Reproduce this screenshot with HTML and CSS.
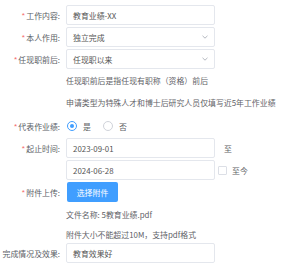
FILE: index.html
```html
<!DOCTYPE html>
<html lang="zh-CN">
<head>
  <meta charset="UTF-8">
  <title>业绩填写</title>
  <link rel="stylesheet" href="styles.css">
</head>
<body>
  <!-- Form: 工作业绩 -->
  <form class="form">
    <div class="row row-first">
      <label class="label"><span class="req">*</span>工作内容:</label>
      <div class="input">教育业绩-XX</div>
    </div>
    <div class="row">
      <label class="label"><span class="req">*</span>本人作用:</label>
      <div class="input select">独立完成
        <svg class="arrow" width="6" height="4" viewBox="0 0 6 4"><path d="M0.5 0.8 L3 3.2 L5.5 0.8" fill="none" stroke="#b4b8bf" stroke-width="1"/></svg>
      </div>
    </div>
    <div class="row">
      <label class="label"><span class="req">*</span>任现职前后:</label>
      <div class="input select">任现职以来
        <svg class="arrow" width="6" height="4" viewBox="0 0 6 4"><path d="M0.5 0.8 L3 3.2 L5.5 0.8" fill="none" stroke="#b4b8bf" stroke-width="1"/></svg>
      </div>
    </div>
    <div class="row hint">
      <span class="label"></span>
      <span class="note">任现职前后是指任现有职称（资格）前后</span>
    </div>
    <div class="row hint">
      <span class="label"></span>
      <span class="note">申请类型为特殊人才和博士后研究人员仅填写近5年工作业绩</span>
    </div>
    <div class="row row-radio">
      <label class="label"><span class="req">*</span>代表作业绩:</label>
      <span class="radio checked"></span><span class="radio-text">是</span>
      <span class="radio"></span><span class="radio-text">否</span>
    </div>
    <div class="row row-date">
      <label class="label"><span class="req">*</span>起止时间:</label>
      <div class="input">2023-09-01</div>
      <span class="to">至</span>
    </div>
    <div class="row">
      <span class="label"></span>
      <div class="input">2024-06-28</div>
      <span class="checkbox"></span><span class="now">至今</span>
    </div>
    <div class="row">
      <label class="label"><span class="req">*</span>附件上传:</label>
      <button type="button" class="upload-button">选择附件</button>
    </div>
    <div class="row row-file">
      <span class="label"></span>
      <span class="note">文件名称: 5教育业绩.pdf</span>
    </div>
    <div class="row row-size">
      <span class="label"></span>
      <span class="note">附件大小不能超过10M，支持pdf格式</span>
    </div>
    <div class="row row-last">
      <label class="label">完成情况及效果:</label>
      <div class="input">教育效果好</div>
    </div>
  </form>
</body>
</html>
```
FILE: styles.css
```css
/* Reset */
* {
  margin: 0;
  padding: 0;
  box-sizing: border-box;
}

body {
  font-family: "Noto Sans CJK SC", "Noto Sans", sans-serif;
  font-size: 7.9px;
  color: #606266;
  background: #fff;
  overflow: hidden;
}

/* Form layout */
.form {
  display: flex;
  flex-direction: column;
  padding-top: 5px;
}

.row {
  display: flex;
  align-items: center;
  height: 20px;
  margin-top: 2px;
}

.row-first {
  margin-top: 0;
}

.label {
  flex: none;
  width: 60px;
  margin-right: 6px;
  display: flex;
  justify-content: flex-end;
  white-space: nowrap;
  color: #5a5e66;
}

.req {
  color: #f56c6c;
  margin-right: 1px;
}

/* Inputs */
.input {
  flex: none;
  width: 149px;
  height: 20px;
  border: 1px solid #e4e7ed;
  border-radius: 2px;
  padding-left: 6px;
  display: flex;
  align-items: center;
  color: #555;
  white-space: nowrap;
}

.select {
  justify-content: space-between;
  padding-right: 6px;
}

.arrow {
  display: block;
}

/* Hints */
.hint {
  height: 22px;
  margin-top: 0;
}

.note {
  white-space: nowrap;
  color: #5f6267;
}

/* Radio */
.row-radio {
  height: 24px;
  margin-top: 1px;
}

.radio {
  flex: none;
  width: 10px;
  height: 10px;
  border: 1px solid #d0d3da;
  border-radius: 50%;
  margin-left: 1px;
  display: flex;
  align-items: center;
  justify-content: center;
}

.radio + .radio-text {
  margin-left: 6px;
}

.radio-text + .radio {
  margin-left: 12px;
}

.radio.checked {
  border-color: #409eff;
}

.radio.checked::after {
  content: "";
  width: 4px;
  height: 4px;
  border-radius: 50%;
  background: #409eff;
}

/* Date range */
.row-date {
  margin-top: 0;
}

.to {
  margin-left: 9px;
}

.checkbox {
  flex: none;
  width: 9px;
  height: 9px;
  border: 1px solid #dcdfe6;
  border-radius: 1px;
  margin-left: 3px;
}

.now {
  margin-left: 5px;
}

/* Upload */
.upload-button {
  margin-left: 1px;
  width: 51px;
  height: 20px;
  border: none;
  border-radius: 2px;
  background: #409eff;
  color: #fff;
  font-family: inherit;
  font-size: 7.9px;
}

.row-file {
  height: 24px;
  margin-top: 0;
}

.row-size {
  height: 17px;
  margin-top: 0;
}

.row-last {
  margin-top: 0;
}
```
